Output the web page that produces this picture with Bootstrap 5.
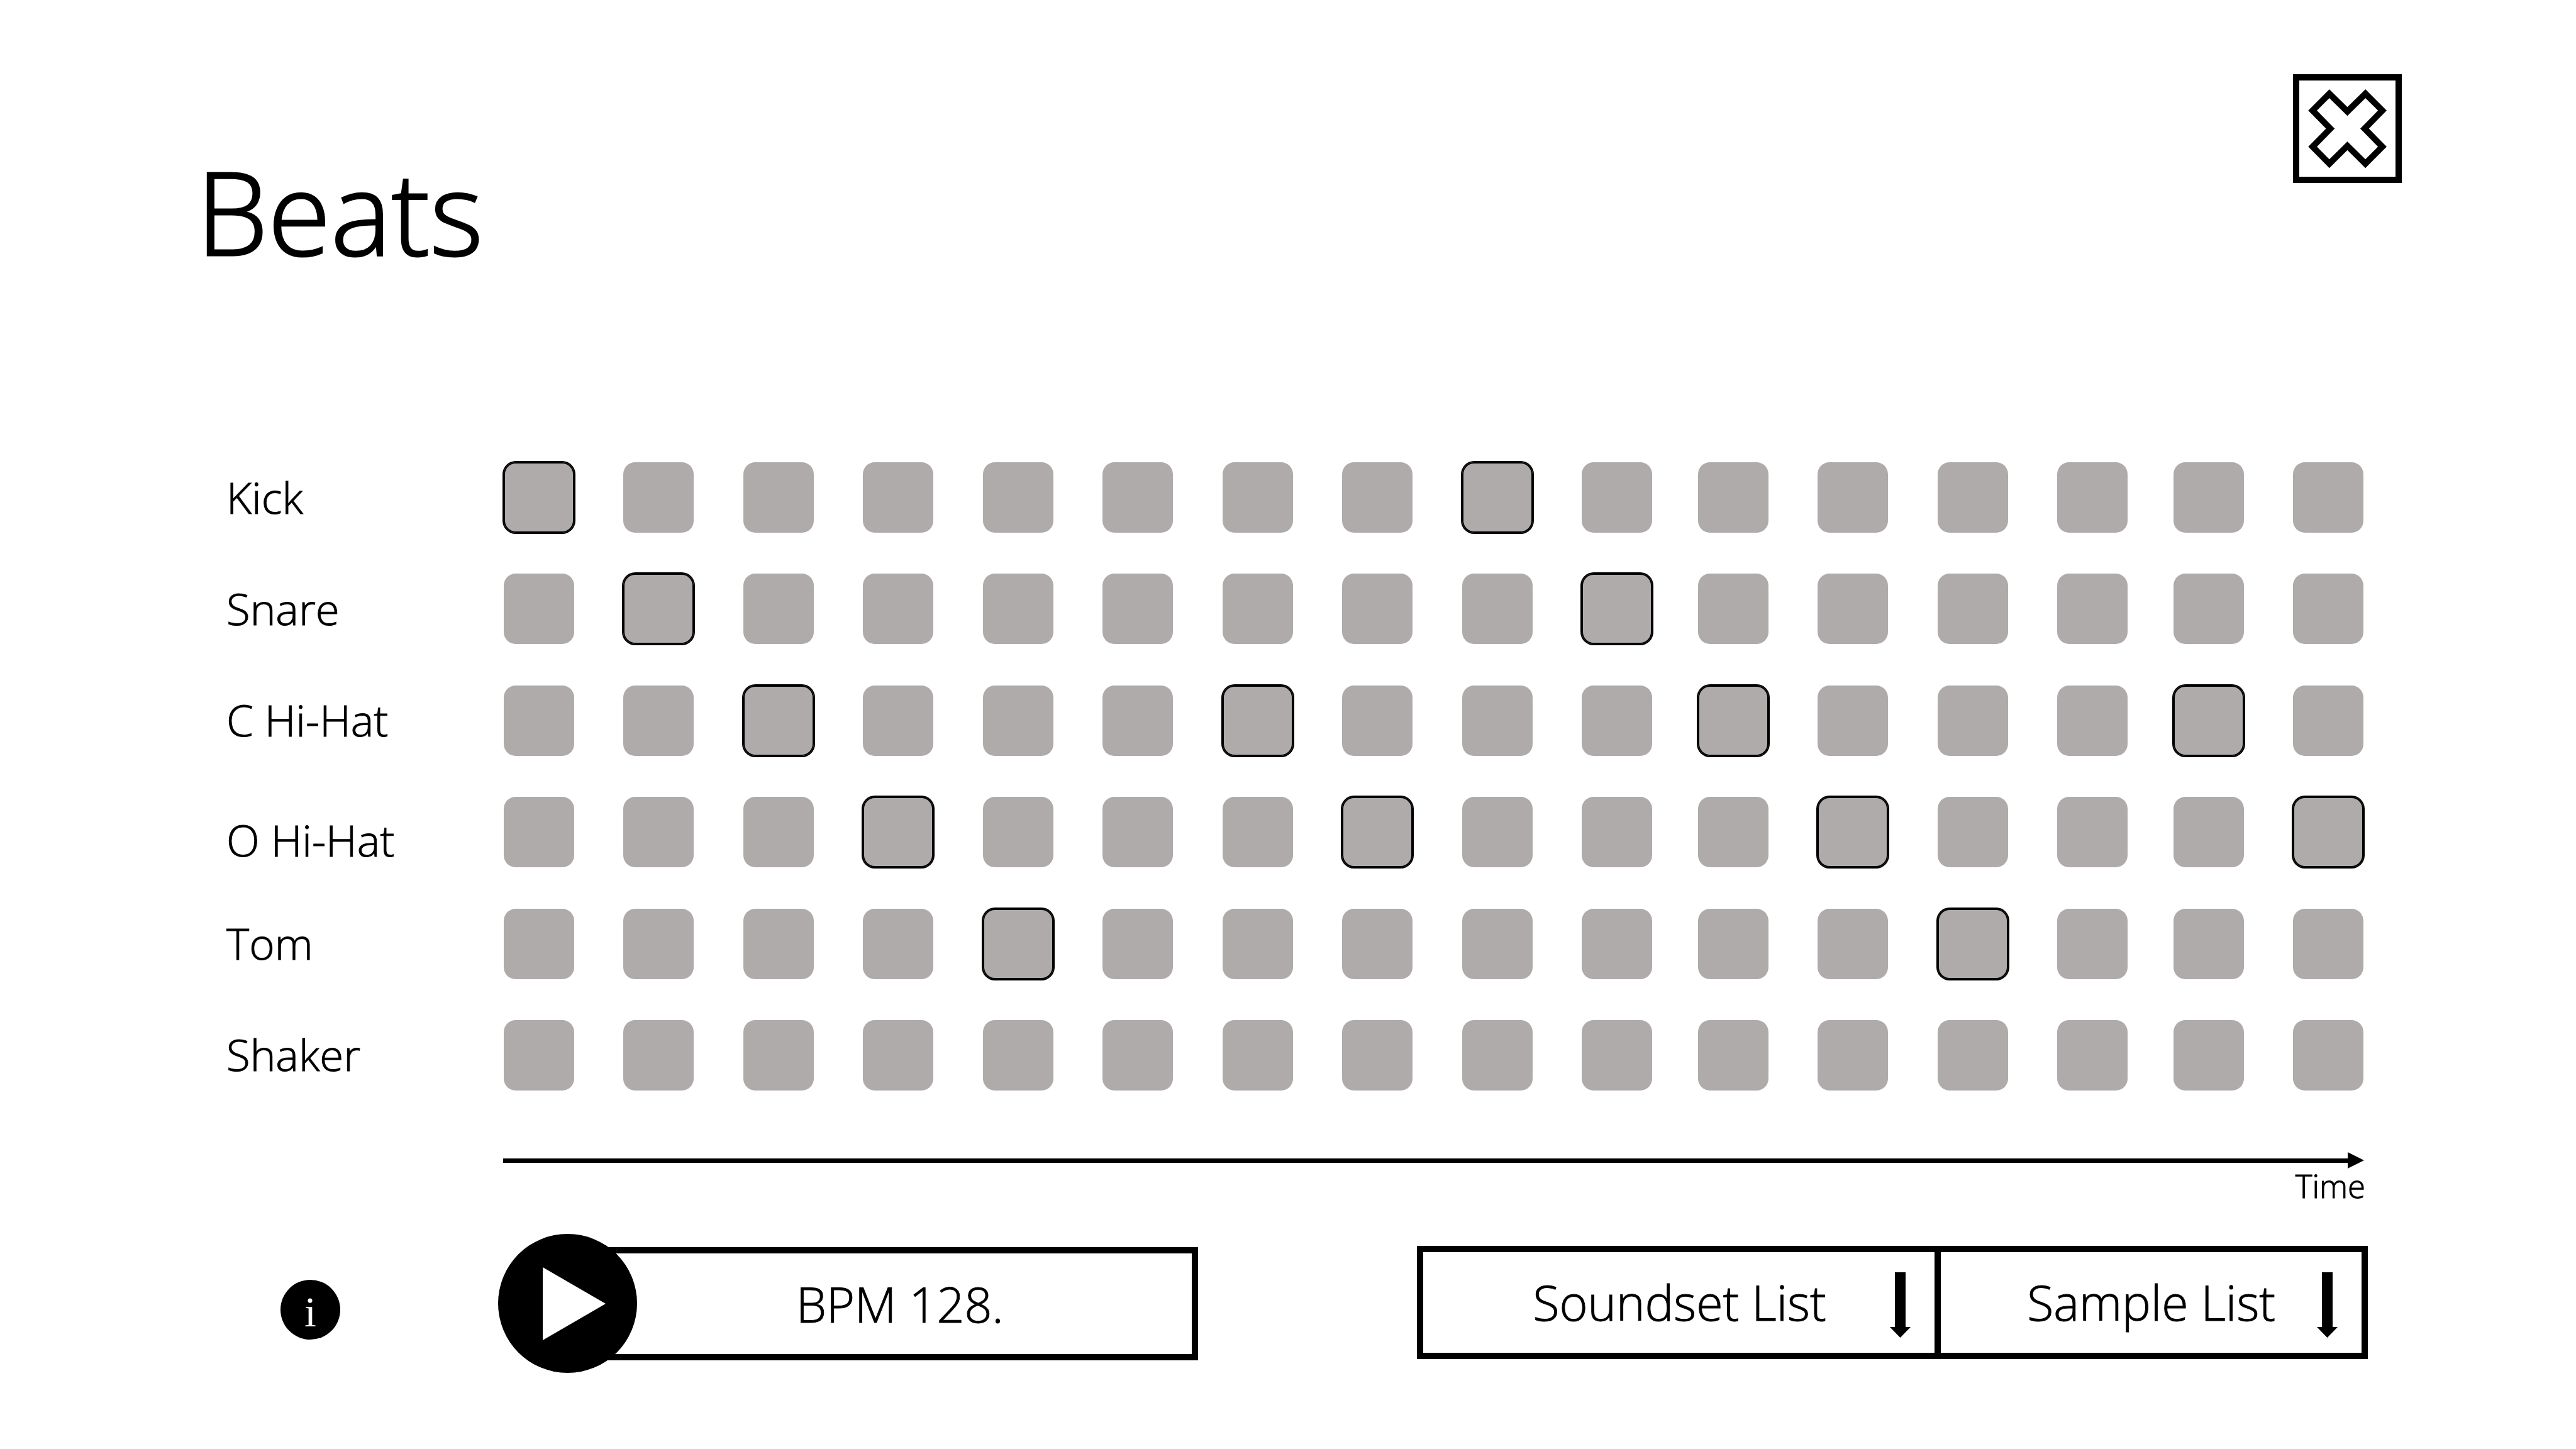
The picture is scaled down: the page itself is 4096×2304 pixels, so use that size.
<!DOCTYPE html>
<html lang="en">
<head>
<meta charset="utf-8">
<meta name="viewport" content="width=device-width, initial-scale=1">
<title>Beats</title>
<link href="https://cdn.jsdelivr.net/npm/bootstrap@5.3.0/dist/css/bootstrap.min.css" rel="stylesheet">
<style>
  body { font-family: "Open Sans", "Noto Sans", sans-serif; font-weight: 300; color: #000; background: #fff; -webkit-text-stroke: 1px currentColor; }

  .page-head { padding: 118px 277px 0 312px; }
  .page-title { margin: 117px 0 0; font-size: 182px; line-height: 200px; font-weight: 300; -webkit-text-stroke-width: 3px; color: #000; }
  .close-btn { width: 173px; height: 173px; border: 10px solid #000; }

  .sequencer { height: 999px; margin-top: 300px; padding: 0 338px 0 360px; }
  .track-name { width: 441px; padding-bottom: 3px; font-size: 69px; line-height: 82px; }
  .beat-groups { gap: 73px; }
  .beats-10 { flex: 1826 1 0; }
  .beats-4 { flex: 683 1 0; }
  .beats-2 { flex: 302 1 0; }
  .form-check-input.pad { width: 112px; height: 112px; margin: 0; border: 0; border-radius: 19px; background: #afabab; }
  .form-check-input.pad:checked { background: #afabab; box-shadow: 0 0 0 2px #000, inset 0 0 0 2px #000; }

  .timeline { margin: 98px 337px 0 800px; }
  .timeline-bar { height: 7px; background: #000; }
  .time-label { padding-right: 335px; font-size: 51px; line-height: 54px; }

  .controls { margin-top: 50px; padding: 0 331px 0 446px; }
  .info-slot { padding-top: 20px; }
  .info-btn { width: 95px; height: 95px; margin-right: 251px; padding: 6px 0 0; font-family: "Liberation Serif", serif; font-weight: 400; font-size: 68px; line-height: 80px; -webkit-text-stroke-width: 0; background: #000; color: #fff; }
  .player { flex: 1113 1 0; }
  .play-btn { width: 221px; height: 221px; background: #000; z-index: 1; }
  .boxed { height: 180px; border: 10px solid #000; border-radius: 0; font-size: 77px; line-height: 120px; font-weight: 300; -webkit-text-stroke: 1px #000; color: #000; background-color: #fff; }
  .bpm-box { margin-left: -57px; padding: 2px 0 0; }
  .lists { flex: 1511 1 0; margin-left: 348px; }
  .list-box { padding: 0 80px 0 137px; background-size: 33px 104px; background-position: right 38px top 32px;
    background-image: url("data:image/svg+xml,%3csvg xmlns='http://www.w3.org/2000/svg' viewBox='0 0 33 104'%3e%3cpath d='M8 0h17v87h8L16.500 104 0 87h8z'/%3e%3c/svg%3e"); }
  .soundset-box { flex: 559 1 0; padding-left: 174px; }
  .sample-box { flex: 452 1 0; margin-left: -10px; }
</style>
<script src="https://cdn.jsdelivr.net/npm/bootstrap@5.3.0/dist/js/bootstrap.bundle.min.js"></script>
</head>
<body>
<header class="page-head d-flex justify-content-between align-items-start">
  <h1 class="page-title">Beats</h1>
  <button type="button" class="close-btn bg-white p-0 d-block" aria-label="Close">
    <svg class="d-block w-100 h-100" viewBox="188 146 720 720" aria-hidden="true">
      <path fill-rule="evenodd" d="M413 212 548 345 683 212 842 371 709 506 842 641 683 801 548 667 413 801 255 641 388 506 255 371zM413 278 548 411 683 278 777 371 644 506 777 641 683 735 548 602 413 735 320 641 453 506 320 371z"/>
    </svg>
  </button>
</header>

<main>
  <section class="sequencer d-flex flex-column justify-content-between" id="sequencer" aria-label="Step sequencer"></section>

  <div class="timeline d-flex align-items-center">
    <div class="timeline-bar flex-grow-1"></div>
    <svg width="26" height="26" viewBox="0 0 26 26" aria-hidden="true"><path d="M0 0 26 13 0 26z"/></svg>
  </div>
  <div class="time-label text-end">Time</div>
</main>

<footer class="controls d-flex align-items-center">
  <div class="info-slot">
    <button type="button" class="info-btn border-0 rounded-circle d-flex align-items-center justify-content-center" aria-label="Information">i</button>
  </div>
  <div class="player d-flex align-items-center">
    <button type="button" class="play-btn position-relative flex-shrink-0 border-0 rounded-circle p-0" aria-label="Play">
      <svg class="d-block" width="221" height="221" viewBox="0 0 221 221" aria-hidden="true"><path fill="#fff" d="M71 53 171 111 71 169z"/></svg>
    </button>
    <input type="text" class="boxed bpm-box form-control text-center" aria-label="Tempo" value="BPM 128.">
  </div>
  <div class="lists d-flex mb-1">
    <select class="boxed list-box soundset-box form-select" aria-label="Soundset"><option>Soundset List</option></select>
    <select class="boxed list-box sample-box form-select" aria-label="Sample"><option>Sample List</option></select>
  </div>
</footer>

<script>
  const tracks = [
    { name: "Kick", on: [1, 9] },
    { name: "Snare", on: [2, 10] },
    { name: "C Hi-Hat", on: [3, 7, 11, 15] },
    { name: "O Hi-Hat", on: [4, 8, 12, 16], low: true },
    { name: "Tom", on: [5, 13] },
    { name: "Shaker", on: [] }
  ];
  const groups = [10, 4, 2];

  document.getElementById("sequencer").innerHTML = tracks.map(t => {
    let step = 0;
    const pads = groups.map(n => {
      let cells = "";
      for (let i = 0; i < n; i++) {
        step++;
        cells += `<input type="checkbox" class="pad form-check-input flex-shrink-0" aria-label="${t.name} step ${step}"${t.on.includes(step) ? " checked" : ""}>`;
      }
      return `<div class="beats-${n} d-flex justify-content-between">${cells}</div>`;
    }).join("");
    return `<div class="d-flex align-items-center" role="group" aria-label="${t.name}">
      <div class="track-name flex-shrink-0${t.low ? " align-self-end" : ""}">${t.name}</div>
      <div class="beat-groups d-flex flex-grow-1">${pads}</div></div>`;
  }).join("");
</script>
</body>
</html>
